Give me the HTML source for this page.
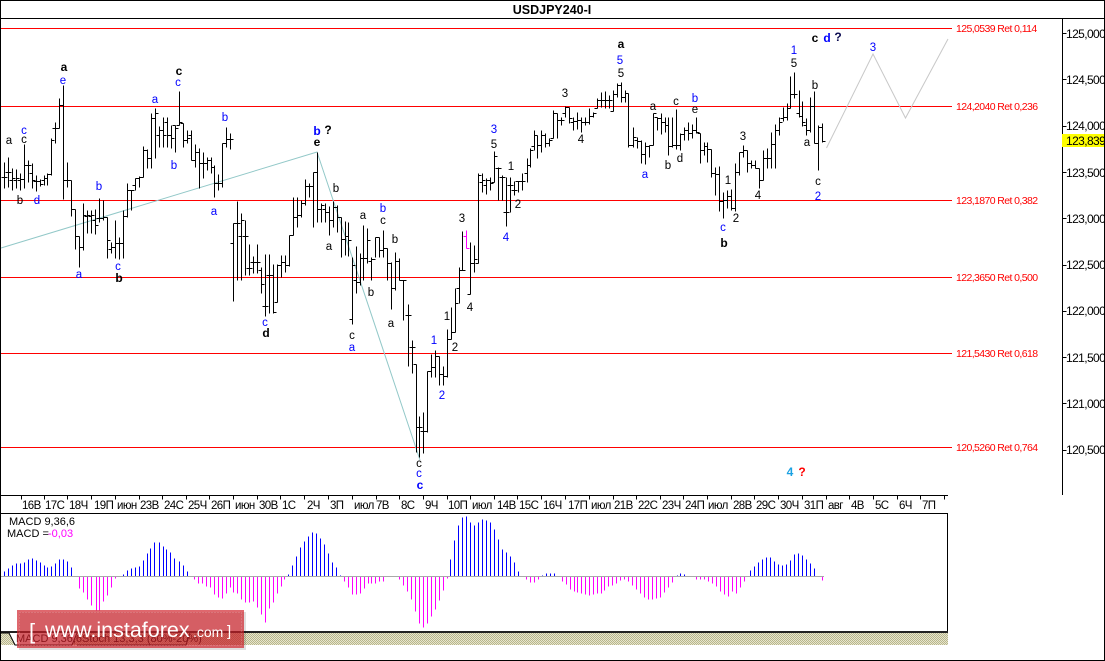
<!DOCTYPE html>
<html><head><meta charset="utf-8"><style>
html,body{margin:0;padding:0;background:#fff}
svg{display:block}
text{font-family:"Liberation Sans",sans-serif}
.t{font-size:11.5px;letter-spacing:-.6px;fill:#000}
.p{font-size:12px;letter-spacing:-.6px;fill:#000}
.r{font-size:10.5px;letter-spacing:-.6px;fill:#f00}
.w{font-size:11.5px;text-anchor:middle}
.b{font-size:12px;font-weight:bold;text-anchor:middle}
.k{fill:#000}.u{fill:#00f}
</style></head><body>
<svg width="1105" height="661" viewBox="0 0 1105 661" xmlns="http://www.w3.org/2000/svg">
<defs><pattern id="h" width="2" height="2" patternUnits="userSpaceOnUse"><rect width="2" height="2" fill="#e6e5cf"/><rect width="1" height="1" fill="#b9b68a"/><rect x="1" y="1" width="1" height="1" fill="#b9b68a"/></pattern></defs>
<rect width="1105" height="661" fill="#fff"/>
<path shape-rendering="crispEdges" stroke="#000" fill="none" d="M0 .5H1105M.5 0V661M1104.5 0V661M0 660.5H1105M0 18.5H1105M1062.5 18V495M0 495.5H948M0 513.5H948M947.5 513V632"/>
<rect x="1" y="631" width="947" height="2" fill="#222"/>
<rect x="1" y="633" width="947" height="12" fill="url(#h)"/>
<path d="M9 633L15 645H72L77 633Z" fill="#fff"/>
<path d="M1 633H9L15 645H72L77 633M77 645H186L190 633" fill="none" stroke="#000"/>
<text x="16" y="642" font-size="11" fill="#000">MACD 9,36,6</text>
<text x="82" y="642" font-size="11" fill="#000">Stoch 13,3,3 (80%-20%)</text>
<path shape-rendering="crispEdges" stroke="#f00" fill="none" d="M1 28.5H952M1 106.5H952M1 200.5H952M1 277.5H952M1 353.5H952M1 447.5H952"/>
<text class="r" x="956" y="32">125,0539 Ret 0,114</text>
<text class="r" x="956" y="110">124,2040 Ret 0,236</text>
<text class="r" x="956" y="204">123,1870 Ret 0,382</text>
<text class="r" x="956" y="281">122,3650 Ret 0,500</text>
<text class="r" x="956" y="357">121,5430 Ret 0,618</text>
<text class="r" x="956" y="451">120,5260 Ret 0,764</text>
<path d="M1 248L317 152L420 460" fill="none" stroke="#92c8c8" stroke-width="1"/>
<path d="M826.5 148L873 54L905.5 118L948 39" fill="none" stroke="#c8c8c8" stroke-width="1"/>
<g transform="translate(.5 .5)">
<path shape-rendering="crispEdges" stroke="#000" stroke-width="1" fill="none" d="
M4 162V188M1 177h3M4 177h3
M8 157V187M5 172h3M8 172h3
M12 168V190M9 180h3M12 178h3
M16 169V188M13 180h3M16 178h3
M20 173V190M17 180h3M20 179h3
M24 144V188M21 179h3M24 165h3
M28 160V182M25 165h3M28 165h3
M32 163V188M29 173h3M32 180h3
M36 175V191M33 181h3M36 181h3
M40 179V186M37 181h3M40 184h3
M44 175V185M41 180h3M44 178h3
M47 173V185M44 178h3M47 174h3
M51 138V175M48 174h3M51 140h3
M55 122V143M52 128h3M55 128h3
M59 98V128M56 128h3M59 105h3
M63 85V199M60 105h3M63 180h3
M67 162V187M64 180h3M67 180h3
M71 180V216M68 180h3M71 209h3
M75 209V249M72 209h3M75 236h3
M79 236V267M76 236h3M79 247h3
M83 203V250M80 247h3M83 215h3
M87 210V233M84 216h3M87 215h3
M91 210V233M88 216h3M91 215h3
M95 209V234M92 220h3M95 225h3
M99 198V222M96 218h3M99 218h3
M103 200V220M100 218h3M103 217h3
M107 217V258M104 217h3M107 240h3
M111 242V253M108 249h3M111 247h3
M115 220V258M112 247h3M115 243h3
M119 237V259M116 243h3M119 243h3
M123 210V258M120 243h3M123 216h3
M127 183V217M124 216h3M127 190h3
M131 190V210M128 190h3M131 190h3
M135 178V190M132 185h3M135 178h3
M139 176V187M136 178h3M139 177h3
M143 146V177M140 177h3M143 150h3
M147 149V168M144 150h3M147 158h3
M151 113V168M148 158h3M151 118h3
M155 108V158M152 118h3M155 113h3
M159 126V147M156 135h3M159 130h3
M163 117V147M160 130h3M163 135h3
M167 117V147M164 122h3M167 135h3
M171 125V148M168 135h3M171 138h3
M175 125V152M172 125h3M175 128h3
M179 91V125M176 125h3M179 122h3
M183 123V147M180 123h3M183 140h3
M187 130V143M184 140h3M187 138h3
M191 130V160M188 135h3M191 160h3
M195 144V167M192 160h3M195 152h3
M199 148V188M196 152h3M199 163h3
M203 152V178M200 163h3M203 163h3
M207 157V170M204 163h3M207 160h3
M211 157V173M208 160h3M211 167h3
M214 165V197M211 167h3M214 183h3
M218 174V190M215 183h3M218 183h3
M222 143V187M219 183h3M222 143h3
M226 127V147M223 143h3M226 139h3
M230 133V149M227 139h3M230 139h3
M233 223V301M230 243h3M233 223h3
M237 201V280M234 223h3M237 223h3
M241 213V280M238 236h3M241 220h3
M245 220V275M242 236h3M245 236h3
M249 244V275M246 268h3M249 268h3
M253 256V273M250 262h3M253 262h3
M257 244V273M254 262h3M257 262h3
M261 267V293M258 270h3M261 284h3
M265 254V316M262 306h3M265 306h3
M269 254V313M266 275h3M269 275h3
M273 264V313M270 275h3M273 312h3
M277 264V302M274 302h3M277 265h3
M281 255V277M278 265h3M281 262h3
M285 255V272M282 262h3M285 265h3
M289 235V266M286 265h3M289 235h3
M293 197V235M290 235h3M293 217h3
M297 197V227M294 217h3M297 215h3
M301 200V217M298 215h3M301 203h3
M305 179V205M302 203h3M305 186h3
M309 183V197M306 186h3M309 186h3
M313 172V227M310 186h3M313 172h3
M317 152V222M314 172h3M317 209h3
M321 203V222M318 209h3M321 205h3
M325 203V222M322 209h3M325 212h3
M329 206V235M326 212h3M329 220h3
M333 201V227M330 220h3M333 207h3
M337 205V232M334 207h3M337 217h3
M341 217V257M338 217h3M341 239h3
M345 221V255M342 239h3M345 236h3
M348 222V256M345 236h3M348 240h3
M352 257V324M349 319h3M352 265h3
M356 246V293M353 280h3M356 282h3
M360 253V285M357 282h3M360 258h3
M363 225V280M360 258h3M363 258h3
M367 228V263M364 258h3M367 240h3
M371 257V280M368 261h3M371 259h3
M375 237V257M372 259h3M375 237h3
M379 237V257M376 237h3M379 250h3
M383 230V257M380 250h3M383 248h3
M387 248V280M384 248h3M387 263h3
M391 262V309M388 263h3M391 288h3
M395 252V290M392 288h3M395 261h3
M399 258V280M396 261h3M399 280h3
M403 280V320M400 280h3M403 280h3
M408 304V366M405 315h3M408 315h3
M412 340V373M409 347h3M412 347h3
M416 364V452M413 364h3M416 427h3
M419 416V457M416 427h3M419 427h3
M423 412V453M420 431h3M423 431h3
M427 371V432M424 431h3M427 371h3
M431 354V377M428 371h3M431 367h3
M435 350V377M432 367h3M435 356h3
M439 356V385M436 356h3M439 374h3
M443 366V385M440 374h3M443 376h3
M447 329V377M444 376h3M447 339h3
M451 307V339M448 339h3M451 332h3
M455 288V332M452 332h3M455 303h3
M459 267V303M456 288h3M459 270h3
M462 231V270M459 270h3M462 270h3
M470 242V294M467 294h3M470 263h3
M474 245V272M471 263h3M474 259h3
M478 173V263M475 263h3M478 175h3
M482 173V192M479 182h3M482 180h3
M486 178V194M483 185h3M486 180h3
M490 177V190M487 180h3M490 183h3
M494 151V182M491 182h3M494 156h3
M498 167V200M495 168h3M498 168h3
M502 175V200M499 177h3M502 177h3
M506 177V226M503 212h3M506 212h3
M510 177V212M507 185h3M510 185h3
M514 181V195M511 190h3M514 190h3
M518 181V192M515 181h3M518 181h3
M522 173V190M519 181h3M522 181h3
M527 158V182M524 173h3M527 165h3
M530 148V167M527 165h3M530 150h3
M534 130V150M531 146h3M534 135h3
M537 135V158M534 135h3M537 145h3
M541 130V152M538 145h3M541 135h3
M545 133V147M542 135h3M545 143h3
M549 138V146M546 143h3M549 140h3
M553 110V138M550 138h3M553 113h3
M557 113V138M554 113h3M557 120h3
M561 117V125M558 120h3M561 120h3
M565 106V117M562 113h3M565 107h3
M569 107V123M566 107h3M569 118h3
M573 117V130M570 122h3M573 121h3
M577 112V129M574 121h3M577 120h3
M581 117V132M578 120h3M581 122h3
M585 117V125M582 122h3M585 122h3
M589 108V124M586 122h3M589 116h3
M593 112V117M590 116h3M593 113h3
M597 98V108M594 108h3M597 100h3
M601 92V107M598 100h3M601 100h3
M605 91V108M602 100h3M605 100h3
M609 95V108M606 100h3M609 100h3
M613 90V111M610 111h3M613 94h3
M617 83V97M614 94h3M617 85h3
M621 82V102M618 85h3M621 97h3
M625 90V102M622 97h3M625 93h3
M628 93V147M625 93h3M628 145h3
M633 127V147M630 145h3M633 137h3
M637 137V148M634 140h3M637 141h3
M641 140V163M638 141h3M641 154h3
M645 142V164M642 154h3M645 146h3
M649 145V157M646 146h3M649 145h3
M653 113V145M650 145h3M653 113h3
M657 117V130M654 117h3M657 118h3
M661 113V134M658 118h3M661 122h3
M665 117V132M662 122h3M665 125h3
M668 117V155M665 125h3M668 146h3
M672 117V147M669 146h3M672 145h3
M676 109V149M673 145h3M676 145h3
M680 133V150M677 145h3M680 134h3
M684 127V140M681 134h3M684 130h3
M688 122V140M685 130h3M688 133h3
M692 124V138M689 133h3M692 130h3
M696 117V133M693 130h3M696 132h3
M700 133V163M697 133h3M700 150h3
M704 142V155M701 150h3M704 146h3
M707 142V162M704 146h3M707 149h3
M711 149V177M708 149h3M711 173h3
M715 167V195M712 173h3M715 174h3
M719 166V211M716 174h3M719 201h3
M723 192V218M720 201h3M723 200h3
M727 190V208M724 200h3M727 196h3
M731 189V210M728 196h3M731 208h3
M735 163V211M732 208h3M735 172h3
M739 152V175M736 172h3M739 152h3
M743 145V157M740 152h3M743 150h3
M747 150V172M744 150h3M747 163h3
M751 160V168M748 163h3M751 165h3
M755 160V168M752 165h3M755 168h3
M759 168V188M756 168h3M759 180h3
M763 150V180M760 180h3M763 158h3
M767 148V168M764 158h3M767 158h3
M771 132V168M768 158h3M771 144h3
M775 124V168M772 144h3M775 130h3
M779 117V135M776 130h3M779 122h3
M783 107V121M780 118h3M783 117h3
M787 103V120M784 117h3M787 108h3
M790 76V108M787 108h3M790 94h3
M794 72V98M791 94h3M794 94h3
M799 90V117M796 113h3M799 116h3
M802 101V126M799 116h3M802 122h3
M806 118V135M803 125h3M806 130h3
M810 97V132M807 130h3M810 106h3
M814 91V143M811 106h3M814 143h3
M818 125V170M815 143h3M818 127h3
M822 123V142M819 127h3M822 141h3"/>
<path shape-rendering="crispEdges" stroke="#f0f" fill="none" d="M466 230V248M463 236h3M466 248h3"/>
<path shape-rendering="crispEdges" stroke="#00f" fill="none" d="M4 576V571M8 576V568M12 576V565M16 576V563M20 576V563M24 576V562M28 576V559M32 576V558M36 576V560M40 576V562M44 576V565M47 576V567M51 576V566M55 576V563M59 576V559M63 576V559M67 576V561M71 576V567M123 576V574M127 576V570M131 576V568M135 576V567M139 576V566M143 576V560M147 576V553M150 576V548M154 576V542M159 576V542M163 576V546M166 576V549M170 576V552M174 576V558M179 576V561M183 576V565M187 576V571M288 576V574M292 576V565M296 576V556M300 576V547M304 576V541M308 576V536M312 576V532M316 576V533M320 576V538M324 576V544M328 576V553M332 576V562M336 576V567M340 576V575M450 576V559M454 576V540M458 576V525M462 576V517M466 576V516M470 576V522M474 576V525M478 576V522M482 576V519M486 576V520M490 576V522M494 576V529M498 576V539M502 576V549M506 576V552M510 576V556M514 576V562M518 576V571M542 576V575M546 576V573M550 576V573M554 576V573M677 576V575M680 576V573M684 576V574M750 576V570M754 576V566M758 576V562M762 576V559M766 576V557M770 576V557M774 576V561M778 576V564M782 576V565M786 576V564M790 576V560M794 576V554M798 576V553M802 576V555M806 576V559M810 576V563M814 576V568"/>
<path shape-rendering="crispEdges" stroke="#f0f" fill="none" d="M79 576V588M83 576V592M87 576V599M91 576V605M96 576V610M99 576V610M103 576V601M107 576V595M111 576V587M115 576V578M194 576V579M198 576V583M202 576V583M206 576V586M210 576V587M214 576V594M218 576V597M222 576V598M226 576V593M230 576V587M233 576V592M237 576V593M241 576V599M245 576V602M249 576V602M253 576V601M257 576V607M261 576V614M265 576V622M269 576V608M273 576V602M277 576V593M281 576V586M284 576V579M344 576V581M348 576V587M352 576V594M356 576V594M360 576V593M364 576V588M368 576V583M371 576V583M375 576V583M379 576V581M383 576V581M399 576V579M403 576V585M407 576V591M411 576V599M415 576V611M419 576V623M423 576V627M427 576V623M431 576V616M435 576V609M439 576V600M443 576V590M447 576V578M526 576V579M530 576V582M534 576V582M538 576V579M562 576V581M566 576V584M570 576V589M574 576V591M577 576V592M581 576V593M585 576V594M589 576V595M593 576V594M597 576V593M601 576V593M604 576V590M608 576V586M612 576V585M616 576V583M620 576V580M624 576V579M628 576V581M632 576V585M636 576V589M640 576V593M644 576V597M648 576V599M652 576V599M656 576V598M660 576V597M664 576V592M668 576V587M672 576V582M696 576V579M700 576V579M704 576V579M708 576V581M712 576V583M716 576V586M720 576V591M724 576V594M728 576V596M732 576V591M736 576V593M740 576V587M744 576V581M822 576V580"/>
<path shape-rendering="crispEdges" stroke="#000" fill="none" d="M21 495v4M44 495v4M67 495v4M91 495v4M115 495v4M139 495v4M162 495v4M186 495v4M209 495v4M233 495v4M257 495v4M280 495v4M304 495v4M328 495v4M352 495v4M376 495v4M399 495v4M423 495v4M447 495v4M470 495v4M494 495v4M517 495v4M541 495v4M565 495v4M589 495v4M613 495v4M636 495v4M660 495v4M683 495v4M707 495v4M731 495v4M754 495v4M778 495v4M802 495v4M826 495v4M849 495v4M873 495v4M897 495v4M920 495v4M944 495v4"/>
<path shape-rendering="crispEdges" stroke="#000" fill="none" d="M1062 33h4M1062 79h4M1062 126h4M1062 172h4M1062 218h4M1062 265h4M1062 311h4M1062 357h4M1062 403h4M1062 450h4"/>
</g>
<path shape-rendering="crispEdges" stroke="#a8a8a8" fill="none" d="M1 576.5H824"/>
<text x="9" y="525" font-size="11" fill="#000">MACD 9,36,6</text>
<text x="7" y="537" font-size="11" fill="#000">MACD =</text>
<text x="48" y="537" font-size="11" fill="#f0f">-0,03</text>
<text x="552" y="14" font-size="12.5" font-weight="bold" text-anchor="middle" fill="#000">USDJPY240-I</text>
<rect x="1062" y="134" width="42" height="13" fill="#ff0"/>
<text class="p" x="1066" y="38">125,000</text>
<text class="p" x="1066" y="84">124,500</text>
<text class="p" x="1066" y="130">124,000</text>
<text class="p" x="1066" y="145">123,839</text>
<text class="p" x="1066" y="177">123,500</text>
<text class="p" x="1066" y="223">123,000</text>
<text class="p" x="1066" y="269">122,500</text>
<text class="p" x="1066" y="315">122,000</text>
<text class="p" x="1066" y="362">121,500</text>
<text class="p" x="1066" y="408">121,000</text>
<text class="p" x="1066" y="454">120,500</text>
<rect x="1104" y="1" width="1" height="660" fill="#000"/>
<text class="t" x="22" y="509">16В</text><text class="t" x="45" y="509">17С</text><text class="t" x="69" y="509">18Ч</text><text class="t" x="94" y="509">19П</text><text class="t" x="117" y="509">июн</text><text class="t" x="140" y="509">23В</text><text class="t" x="164" y="509">24С</text><text class="t" x="188" y="509">25Ч</text><text class="t" x="211" y="509">26П</text><text class="t" x="235" y="509">июн</text><text class="t" x="259" y="509">30В</text><text class="t" x="282" y="509">1С</text><text class="t" x="307" y="509">2Ч</text><text class="t" x="330" y="509">3П</text><text class="t" x="354" y="509">июл</text><text class="t" x="376" y="509">7В</text><text class="t" x="401" y="509">8С</text><text class="t" x="425" y="509">9Ч</text><text class="t" x="448" y="509">10П</text><text class="t" x="472" y="509">июл</text><text class="t" x="497" y="509">14В</text><text class="t" x="519" y="509">15С</text><text class="t" x="543" y="509">16Ч</text><text class="t" x="568" y="509">17П</text><text class="t" x="591" y="509">июл</text><text class="t" x="614" y="509">21В</text><text class="t" x="638" y="509">22С</text><text class="t" x="662" y="509">23Ч</text><text class="t" x="685" y="509">24П</text><text class="t" x="708" y="509">июл</text><text class="t" x="733" y="509">28В</text><text class="t" x="756" y="509">29С</text><text class="t" x="780" y="509">30Ч</text><text class="t" x="804" y="509">31П</text><text class="t" x="828" y="509">авг</text><text class="t" x="851" y="509">4В</text><text class="t" x="875" y="509">5С</text><text class="t" x="899" y="509">6Ч</text><text class="t" x="922" y="509">7П</text>
<text class="b k" x="64" y="71">a</text><text class="w u" x="63" y="84">e</text><text class="w u" x="24" y="134">c</text><text class="w k" x="24" y="143">c</text><text class="w k" x="9" y="144">a</text><text class="w k" x="20" y="204">b</text><text class="w u" x="37" y="204">d</text><text class="w u" x="99" y="190">b</text><text class="w u" x="79" y="278">a</text><text class="w u" x="118" y="270">c</text><text class="b k" x="119" y="282">b</text><text class="w u" x="155" y="103">a</text><text class="b k" x="179" y="75">c</text><text class="w u" x="178" y="86">c</text><text class="w u" x="174" y="169">b</text><text class="w u" x="225" y="121">b</text><text class="w u" x="214" y="215">a</text>
<text class="b u" x="317" y="135">b</text><text class="b k" x="328" y="134">?</text><text class="b k" x="317" y="146">e</text><text class="w k" x="336" y="192">b</text><text class="w k" x="329" y="250">a</text><text class="w k" x="363" y="219">a</text><text class="w u" x="383" y="212">b</text><text class="w k" x="383" y="224">c</text><text class="w k" x="395" y="243">b</text><text class="w k" x="371" y="296">b</text><text class="w k" x="391" y="327">a</text>
<text class="w u" x="265" y="326">c</text><text class="b k" x="266" y="337">d</text><text class="w k" x="352" y="339">c</text><text class="w u" x="352" y="351">a</text>
<text class="w k" x="462" y="222">3</text><text class="w k" x="470" y="311">4</text><text class="w k" x="447" y="320">1</text><text class="w k" x="455" y="351">2</text><text class="w u" x="434" y="344">1</text><text class="w u" x="442" y="399">2</text><text class="w k" x="419" y="467">c</text><text class="w u" x="419" y="477">c</text><text class="b u" x="420" y="489">c</text>
<text class="w u" x="494" y="133">3</text><text class="w k" x="494" y="148">5</text><text class="w k" x="511" y="170">1</text><text class="w k" x="518" y="208">2</text><text class="w u" x="506" y="241">4</text><text class="w k" x="565" y="97">3</text><text class="w k" x="581" y="143">4</text><text class="b k" x="621" y="48">a</text><text class="w u" x="620" y="64">5</text><text class="w k" x="621" y="77">5</text><text class="w u" x="645" y="178">a</text><text class="w k" x="653" y="110">a</text><text class="w k" x="668" y="169">b</text><text class="w k" x="676" y="105">c</text><text class="w k" x="680" y="162">d</text><text class="w u" x="695" y="102">b</text><text class="w k" x="695" y="113">e</text>
<text class="w k" x="743" y="140">3</text><text class="w k" x="728" y="184">1</text><text class="w k" x="758" y="199">4</text><text class="w k" x="736" y="222">2</text><text class="w u" x="723" y="231">c</text><text class="b k" x="724" y="247">b</text><text class="w k" x="794" y="67">5</text><text class="w u" x="794" y="54">1</text><text class="b k" x="815" y="42">c</text><text class="b u" x="827" y="42">d</text><text class="b" x="838" y="41" fill="#0a0a50">?</text><text class="w k" x="815" y="89">b</text><text class="w k" x="807" y="146">a</text><text class="w k" x="818" y="185">c</text><text class="w u" x="818" y="200">2</text><text class="w u" x="873" y="51">3</text>
<text class="b" x="790" y="476" fill="#1ba1e2" font-size="13">4</text><text class="b" x="802" y="476" fill="#f00" font-size="13">?</text>
<rect x="19" y="612" width="227" height="38" fill="#000" fill-opacity=".12"/>
<rect x="17" y="610" width="227" height="38" fill="#d0202a" fill-opacity=".68"/>
<rect x="19.5" y="612.5" width="222" height="33" fill="none" stroke="#fff" stroke-opacity=".3" stroke-dasharray="1 2"/>
<text x="29" y="639" font-size="22" fill="#fff">[</text>
<text x="45" y="637" font-size="21.5" fill="#fff">www.instaforex</text>
<text x="193" y="637" font-size="14" fill="#fff">.com</text>
<text x="227" y="636" font-size="15" fill="#fff">]</text>
</svg>
</body></html>
